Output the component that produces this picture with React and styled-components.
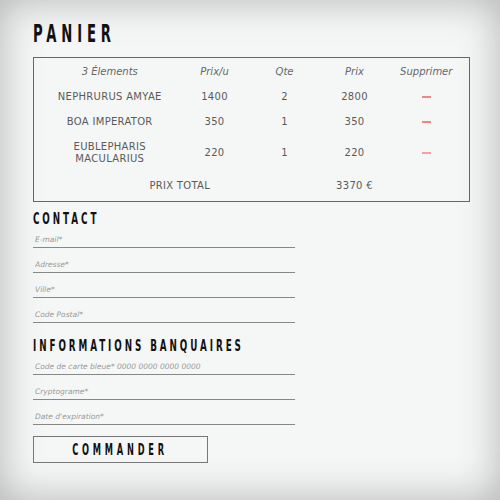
import styled, { createGlobalStyle } from "styled-components";

const Global = createGlobalStyle`
  html, body { margin: 0; padding: 0; }
  body {
    background: #f5f7f6;
    font-family: "DejaVu Sans", "Noto Sans", sans-serif;
  }
`;

const Page = styled.div`
  min-height: 500px;
  box-sizing: border-box;
  padding: 22px 31px 30px 33px;
  box-shadow: inset 0 0 40px rgba(0, 0, 0, 0.28);
  background: #f5f7f6;
`;

// the condensed display face is squeezed out of DejaVu Sans Bold
const Squeeze = styled.span`
  display: inline-block;
  white-space: nowrap;
  transform: scaleX(0.55);
  transform-origin: ${(p) => (p.$center ? "center" : "left")};
`;

const Title = styled.h1`
  margin: 0 0 10px 0;
  font-family: "DejaVu Sans", sans-serif;
  font-weight: 900;
  font-size: 24px;
  line-height: 25px;
  letter-spacing: 8.8px;
  color: #111;
`;

const SubTitle = styled.h2`
  margin: 0 0 1px 0;
  font-family: "DejaVu Sans", sans-serif;
  font-weight: 900;
  font-size: 16px;
  line-height: 18px;
  letter-spacing: 5.3px;
  color: #111;
`;

const Table = styled.table`
  width: 437px;
  border: 1px solid #666;
  border-collapse: collapse;
  margin-bottom: 8px;
  table-layout: fixed;
  color: #5a5a5a;
  font-size: 10px;
`;

const Row = styled.tr`
  height: ${(p) => p.$h}px;
`;

const Head = styled.th`
  font-weight: 300;
  font-style: italic;
  color: #666;
  text-align: center;
  padding: 0;
`;

const Cell = styled.td`
  text-align: center;
  padding: 0;
  line-height: 12px;
  letter-spacing: 0.3px;
`;

const Dash = styled.span`
  display: inline-block;
  width: 9px;
  height: 2px;
  background: ${(p) => (p.$light ? "#f4a0a0" : "#f08585")};
  vertical-align: middle;
`;

const Form = styled.div`
  display: flex;
  flex-direction: column;
  gap: 6px;
  width: 262px;
  margin-bottom: 14px;
`;

const Field = styled.input`
  box-sizing: border-box;
  border: none;
  border-bottom: 1px solid #888;
  background: transparent;
  height: 19px;
  padding: 3px 0 0 2px;
  font-family: "DejaVu Sans", sans-serif;
  font-size: 7.5px;
  font-style: italic;
  outline: none;
  &::placeholder {
    color: #999;
    font-weight: 300;
  }
`;

const Button = styled.button`
  display: flex;
  align-items: center;
  justify-content: center;
  width: 175px;
  height: 27px;
  margin-top: -3px;
  padding: 0;
  border: 1px solid #777;
  background: transparent;
  font-family: "DejaVu Sans", sans-serif;
  font-weight: 900;
  font-size: 15px;
  letter-spacing: 6.9px;
  color: #111;
`;

const items = [
  { name: "NEPHRURUS AMYAE", pu: 1400, q: 2, p: 2800, h: 25 },
  { name: "BOA IMPERATOR", pu: 350, q: 1, p: 350, h: 25 },
  { name: ["EUBLEPHARIS", "MACULARIUS"], pu: 220, q: 1, p: 220, h: 36, light: true },
];

export default function App() {
  return (
    <Page>
      <Global />
      <Title>
        <Squeeze>PANIER</Squeeze>
      </Title>
      <Table>
        <colgroup>
          <col style={{ width: 152 }} />
          <col style={{ width: 58 }} />
          <col style={{ width: 82 }} />
          <col style={{ width: 58 }} />
          <col style={{ width: 86 }} />
        </colgroup>
        <thead>
          <Row $h={27}>
            <Head>3 Élements</Head>
            <Head>Prix/u</Head>
            <Head>Qte</Head>
            <Head>Prix</Head>
            <Head>Supprimer</Head>
          </Row>
        </thead>
        <tbody>
          {items.map((it, i) => (
            <Row key={i} $h={it.h}>
              <Cell>
                {Array.isArray(it.name) ? (
                  <>
                    {it.name[0]}
                    <br />
                    {it.name[1]}
                  </>
                ) : (
                  it.name
                )}
              </Cell>
              <Cell>{it.pu}</Cell>
              <Cell>{it.q}</Cell>
              <Cell>{it.p}</Cell>
              <Cell>
                <Dash $light={it.light} />
              </Cell>
            </Row>
          ))}
          <Row $h={31}>
            <Cell colSpan={3}>PRIX TOTAL</Cell>
            <Cell>3370 €</Cell>
            <Cell />
          </Row>
        </tbody>
      </Table>
      <SubTitle>
        <Squeeze>CONTACT</Squeeze>
      </SubTitle>
      <Form>
        <Field placeholder="E-mail*" />
        <Field placeholder="Adresse*" />
        <Field placeholder="Ville*" />
        <Field placeholder="Code Postal*" />
      </Form>
      <SubTitle>
        <Squeeze>INFORMATIONS BANQUAIRES</Squeeze>
      </SubTitle>
      <Form>
        <Field placeholder="Code de carte bleue* 0000 0000 0000 0000" />
        <Field placeholder="Cryptograme*" />
        <Field placeholder="Date d'expiration*" />
      </Form>
      <Button>
        <Squeeze $center>COMMANDER</Squeeze>
      </Button>
    </Page>
  );
}
